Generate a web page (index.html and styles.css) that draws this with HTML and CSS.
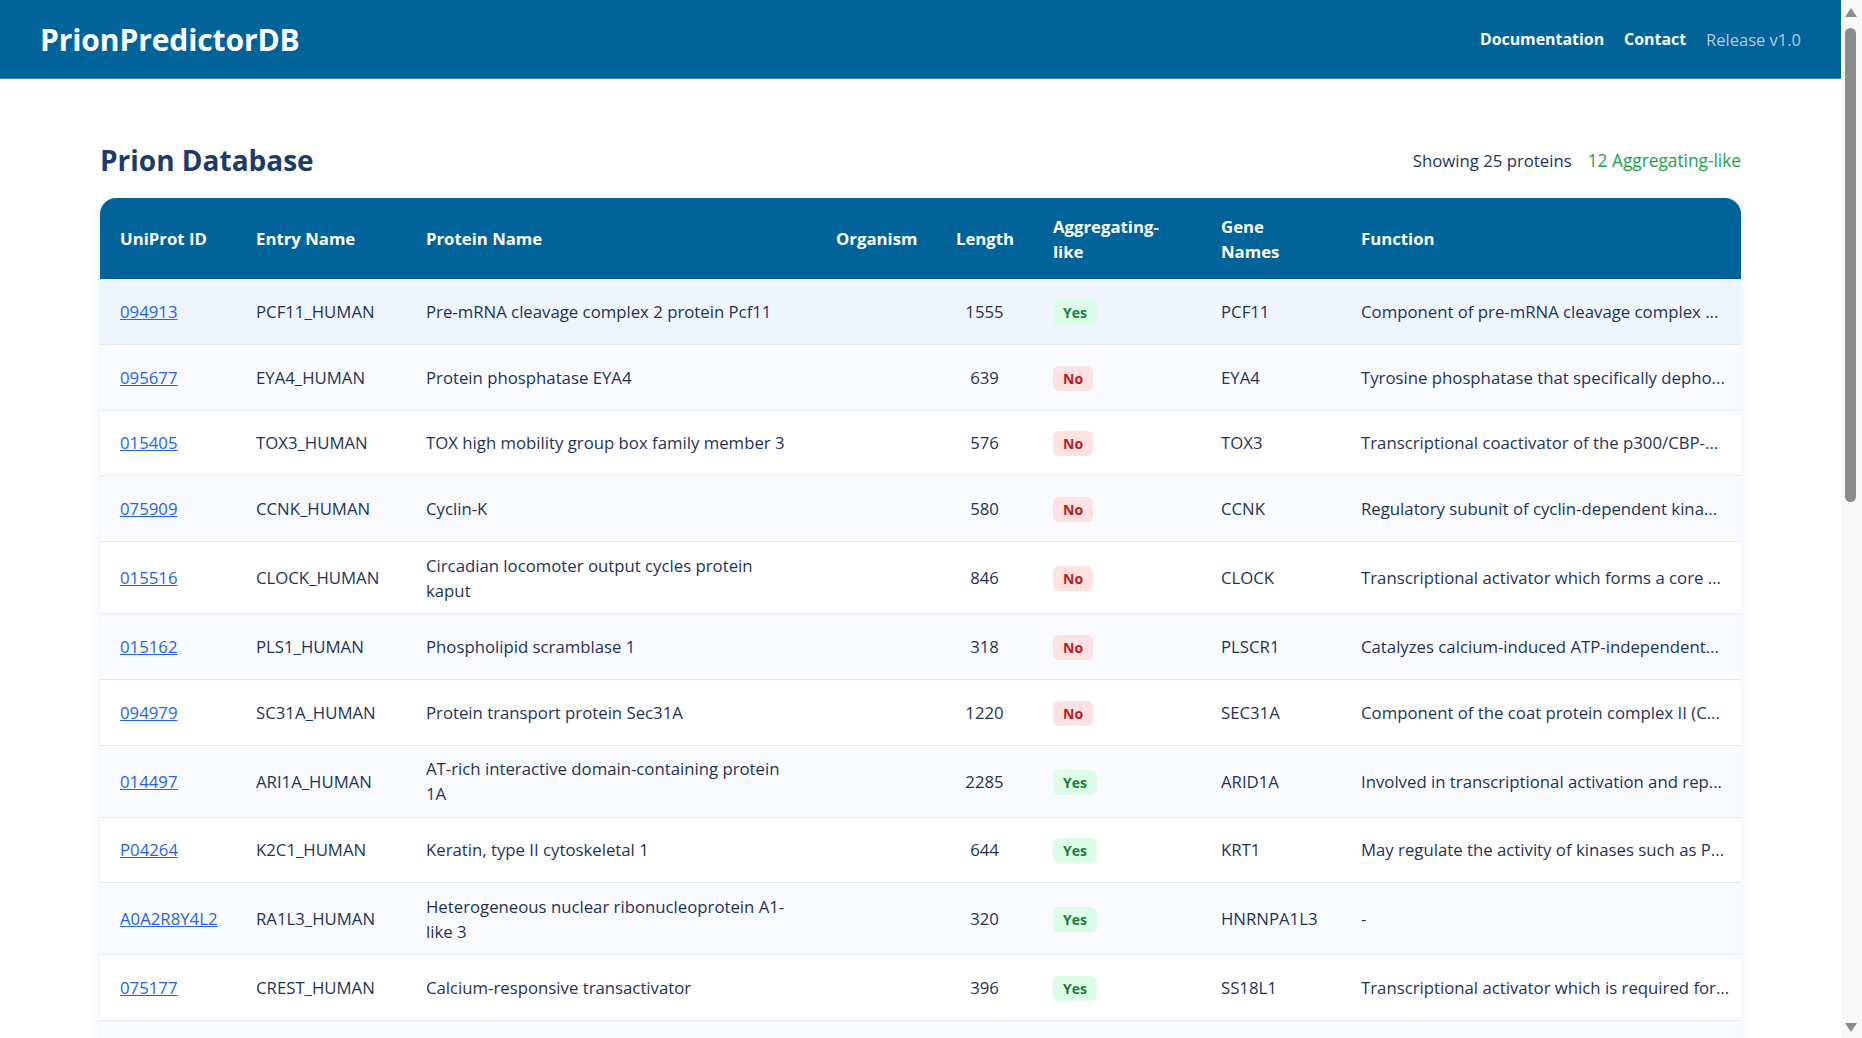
FILE: index.html
```html
<!DOCTYPE html>
<html lang="en">
<head>
<meta charset="utf-8">
<title>PrionPredictorDB</title>
<link rel="stylesheet" href="styles.css">
</head>
<body>
<header class="topbar">
  <div class="brand">PrionPredictorDB</div>
  <nav class="nav">
    <a href="#">Documentation</a>
    <a href="#">Contact</a>
    <span class="release">Release v1.0</span>
  </nav>
</header>
<main class="main">
  <div class="page-head">
    <h1 class="title">Prion Database</h1>
    <div class="stats">
      <span>Showing 25 proteins</span>
      <span class="agg">12 Aggregating-like</span>
    </div>
  </div>
  <div class="table-wrap">
    <table class="ptable">
      <colgroup>
        <col class="c-id"><col class="c-entry"><col class="c-name"><col class="c-org"><col class="c-len"><col class="c-agg"><col class="c-gene"><col class="c-func">
      </colgroup>
      <thead>
        <tr>
          <th>UniProt ID</th>
          <th>Entry Name</th>
          <th>Protein Name</th>
          <th>Organism</th>
          <th>Length</th>
          <th>Aggregating-<br>like</th>
          <th>Gene<br>Names</th>
          <th>Function</th>
        </tr>
      </thead>
      <tbody>
        <tr class="hover"><td><a href="#">094913</a></td><td>PCF11_HUMAN</td><td>Pre-mRNA cleavage complex 2 protein Pcf11</td><td></td><td class="len">1555</td><td><span class="badge yes">Yes</span></td><td>PCF11</td><td class="func">Component of pre-mRNA cleavage complex ...</td></tr>
        <tr><td><a href="#">095677</a></td><td>EYA4_HUMAN</td><td>Protein phosphatase EYA4</td><td></td><td class="len">639</td><td><span class="badge no">No</span></td><td>EYA4</td><td class="func">Tyrosine phosphatase that specifically depho...</td></tr>
        <tr><td><a href="#">015405</a></td><td>TOX3_HUMAN</td><td>TOX high mobility group box family member 3</td><td></td><td class="len">576</td><td><span class="badge no">No</span></td><td>TOX3</td><td class="func">Transcriptional coactivator of the p300/CBP-...</td></tr>
        <tr><td><a href="#">075909</a></td><td>CCNK_HUMAN</td><td>Cyclin-K</td><td></td><td class="len">580</td><td><span class="badge no">No</span></td><td>CCNK</td><td class="func">Regulatory subunit of cyclin-dependent kina...</td></tr>
        <tr><td><a href="#">015516</a></td><td>CLOCK_HUMAN</td><td>Circadian locomoter output cycles protein kaput</td><td></td><td class="len">846</td><td><span class="badge no">No</span></td><td>CLOCK</td><td class="func">Transcriptional activator which forms a core ...</td></tr>
        <tr><td><a href="#">015162</a></td><td>PLS1_HUMAN</td><td>Phospholipid scramblase 1</td><td></td><td class="len">318</td><td><span class="badge no">No</span></td><td>PLSCR1</td><td class="func">Catalyzes calcium-induced ATP-independent...</td></tr>
        <tr><td><a href="#">094979</a></td><td>SC31A_HUMAN</td><td>Protein transport protein Sec31A</td><td></td><td class="len">1220</td><td><span class="badge no">No</span></td><td>SEC31A</td><td class="func">Component of the coat protein complex II (C...</td></tr>
        <tr><td><a href="#">014497</a></td><td>ARI1A_HUMAN</td><td>AT-rich interactive domain-containing protein 1A</td><td></td><td class="len">2285</td><td><span class="badge yes">Yes</span></td><td>ARID1A</td><td class="func">Involved in transcriptional activation and rep...</td></tr>
        <tr><td><a href="#">P04264</a></td><td>K2C1_HUMAN</td><td>Keratin, type II cytoskeletal 1</td><td></td><td class="len">644</td><td><span class="badge yes">Yes</span></td><td>KRT1</td><td class="func">May regulate the activity of kinases such as P...</td></tr>
        <tr><td><a href="#">A0A2R8Y4L2</a></td><td>RA1L3_HUMAN</td><td>Heterogeneous nuclear ribonucleoprotein A1-like 3</td><td></td><td class="len">320</td><td><span class="badge yes">Yes</span></td><td>HNRNPA1L3</td><td class="func">-</td></tr>
        <tr><td><a href="#">075177</a></td><td>CREST_HUMAN</td><td>Calcium-responsive transactivator</td><td></td><td class="len">396</td><td><span class="badge yes">Yes</span></td><td>SS18L1</td><td class="func">Transcriptional activator which is required for...</td></tr>
        <tr><td><a href="#">043765</a></td><td>SGTA_HUMAN</td><td>Small glutamine-rich tetratricopeptide repeat-containing protein alpha</td><td></td><td class="len">313</td><td><span class="badge yes">Yes</span></td><td>SGTA</td><td class="func">Co-chaperone that binds misfolded and hydr...</td></tr>
        <tr><td><a href="#">P35637</a></td><td>FUS_HUMAN</td><td>RNA-binding protein FUS</td><td></td><td class="len">526</td><td><span class="badge yes">Yes</span></td><td>FUS</td><td class="func">DNA/RNA-binding protein that plays a role in...</td></tr>
        <tr><td><a href="#">Q13148</a></td><td>TADBP_HUMAN</td><td>TAR DNA-binding protein 43</td><td></td><td class="len">414</td><td><span class="badge yes">Yes</span></td><td>TARDBP</td><td class="func">RNA-binding protein that is involved in vario...</td></tr>
        <tr><td><a href="#">P09651</a></td><td>ROA1_HUMAN</td><td>Heterogeneous nuclear ribonucleoprotein A1</td><td></td><td class="len">372</td><td><span class="badge yes">Yes</span></td><td>HNRNPA1</td><td class="func">Involved in the packaging of pre-mRNA into h...</td></tr>
        <tr><td><a href="#">Q92804</a></td><td>RBP56_HUMAN</td><td>TATA-binding protein-associated factor 2N</td><td></td><td class="len">592</td><td><span class="badge yes">Yes</span></td><td>TAF15</td><td class="func">RNA and ssDNA-binding protein that may pla...</td></tr>
        <tr><td><a href="#">Q01844</a></td><td>EWS_HUMAN</td><td>RNA-binding protein EWS</td><td></td><td class="len">656</td><td><span class="badge yes">Yes</span></td><td>EWSR1</td><td class="func">Binds to ssRNA containing the consensus seq...</td></tr>
        <tr><td><a href="#">P04156</a></td><td>PRIO_HUMAN</td><td>Major prion protein</td><td></td><td class="len">253</td><td><span class="badge no">No</span></td><td>PRNP</td><td class="func">Its primary physiological function is unclear</td></tr>
        <tr><td><a href="#">Q15233</a></td><td>NONO_HUMAN</td><td>Non-POU domain-containing octamer-binding protein</td><td></td><td class="len">471</td><td><span class="badge no">No</span></td><td>NONO</td><td class="func">DNA- and RNA binding protein, involved in se...</td></tr>
        <tr><td><a href="#">P23246</a></td><td>SFPQ_HUMAN</td><td>Splicing factor, proline- and glutamine-rich</td><td></td><td class="len">707</td><td><span class="badge no">No</span></td><td>SFPQ</td><td class="func">DNA- and RNA binding protein, involved in se...</td></tr>
        <tr><td><a href="#">P22626</a></td><td>ROA2_HUMAN</td><td>Heterogeneous nuclear ribonucleoproteins A2/B1</td><td></td><td class="len">353</td><td><span class="badge yes">Yes</span></td><td>HNRNPA2B1</td><td class="func">Heterogeneous nuclear ribonucleoprotein (hn...</td></tr>
        <tr><td><a href="#">Q99700</a></td><td>ATX2_HUMAN</td><td>Ataxin-2</td><td></td><td class="len">1313</td><td><span class="badge no">No</span></td><td>ATXN2</td><td class="func">Involved in EGFR trafficking, acting as nega...</td></tr>
        <tr><td><a href="#">P31483</a></td><td>TIA1_HUMAN</td><td>Cytotoxic granule associated RNA binding protein TIA1</td><td></td><td class="len">386</td><td><span class="badge no">No</span></td><td>TIA1</td><td class="func">RNA-binding protein involved in the regulati...</td></tr>
        <tr><td><a href="#">Q86U42</a></td><td>PABP2_HUMAN</td><td>Polyadenylate-binding protein 2</td><td></td><td class="len">306</td><td><span class="badge no">No</span></td><td>PABPN1</td><td class="func">Involved in the 3'-end formation of mRNA pr...</td></tr>
        <tr><td><a href="#">P54253</a></td><td>ATX1_HUMAN</td><td>Ataxin-1</td><td></td><td class="len">815</td><td><span class="badge no">No</span></td><td>ATXN1</td><td class="func">Chromatin-binding factor that repress Notch...</td></tr>
      </tbody>
    </table>
  </div>
</main>
<div class="scrollbar" aria-hidden="true">
  <span class="sb-arrow sb-up"></span>
  <span class="sb-thumb"></span>
  <span class="sb-arrow sb-down"></span>
</div>
</body>
</html>
```
FILE: styles.css
```css
html {
  background: #ffffff;
  scrollbar-width: none;
}

html::-webkit-scrollbar {
  display: none;
}

body {
  margin: 0 21px 0 0;
  font-family: "Open Sans", "Noto Sans", "Liberation Sans", sans-serif;
  color: #1f3356;
  background: #ffffff;
}

/* decorative scrollbar overlay, matching the reference window chrome */
.scrollbar {
  position: fixed;
  top: 0;
  right: 0;
  width: 21px;
  height: 100vh;
  background: #f8f8f8;
}

.sb-thumb {
  position: absolute;
  top: 28px;
  left: 4px;
  width: 11px;
  height: 474px;
  border-radius: 6px;
  background: #8b8b8b;
}

.sb-arrow {
  position: absolute;
  left: 4px;
  width: 0;
  height: 0;
  border-left: 6px solid transparent;
  border-right: 6px solid transparent;
}

.sb-up {
  top: 8px;
  border-bottom: 9px solid #8b8b8b;
}

.sb-down {
  bottom: 6px;
  border-top: 9px solid #8b8b8b;
}

.topbar {
  display: flex;
  align-items: center;
  justify-content: space-between;
  height: 79px;
  box-sizing: border-box;
  padding: 0 40px;
  background: #006399;
  border-bottom: 1px solid #3a86b6;
}

.brand {
  font-size: 30px;
  font-weight: 700;
  color: #ffffff;
  letter-spacing: -0.1px;
}

.nav {
  display: flex;
  align-items: center;
  gap: 20px;
  font-size: 15.9px;
}

.nav a {
  color: #ffffff;
  font-weight: 700;
  text-decoration: none;
}

.release {
  color: #b5cce0;
  font-size: 16.5px;
}

.main {
  padding: 63px 100px 190px;
}

.page-head {
  display: flex;
  align-items: center;
  justify-content: space-between;
  height: 36px;
  margin-bottom: 20px;
}

.title {
  margin: 0;
  font-size: 28px;
  line-height: 36px;
  font-weight: 700;
  color: #1e3a6b;
}

.stats {
  display: flex;
  align-items: center;
  gap: 16px;
  font-size: 16.75px;
  color: #1f3356;
}

.agg {
  color: #16a34a;
  font-size: 17.3px;
}

.table-wrap {
  border-radius: 16px;
  overflow: hidden;
  box-shadow: 0 2px 12px rgba(20, 50, 90, 0.08);
}

.ptable {
  width: 100%;
  border-collapse: separate;
  border-spacing: 0;
  table-layout: fixed;
  font-size: 16.75px;
}

.c-id { width: 136px; }
.c-entry { width: 170px; }
.c-name { width: 410px; }
.c-org { width: 120px; }
.c-len { width: 97px; }
.c-agg { width: 168px; }
.c-gene { width: 140px; }
.c-func { width: 400px; }

.ptable th {
  background: #006399;
  color: #ffffff;
  text-align: left;
  font-weight: 700;
  padding: 15.5px 20px;
  line-height: 25px;
  vertical-align: middle;
}

.ptable td {
  height: 65.75px;
  box-sizing: border-box;
  padding: 10.5px 20px;
  line-height: 25px;
  vertical-align: middle;
  border-bottom: 1px solid #e1eaf6;
  color: #1f3356;
}

.ptable tbody tr:nth-child(even) td {
  background: #f8fafe;
}

.ptable tbody tr.hover td {
  background: #eef5fe;
}

.ptable a {
  color: #2563eb;
  text-decoration: underline;
}

.ptable td.len {
  text-align: center;
}

.ptable td.func {
  white-space: nowrap;
  padding-right: 12px;
}

.badge {
  display: inline-block;
  height: 25px;
  line-height: 25px;
  padding: 0 10px;
  border-radius: 6px;
  font-size: 14px;
  font-weight: 700;
  vertical-align: middle;
}

.badge.yes {
  background: #dcfce7;
  color: #15803d;
}

.badge.no {
  background: #fee2e2;
  color: #b91c1c;
}
```
